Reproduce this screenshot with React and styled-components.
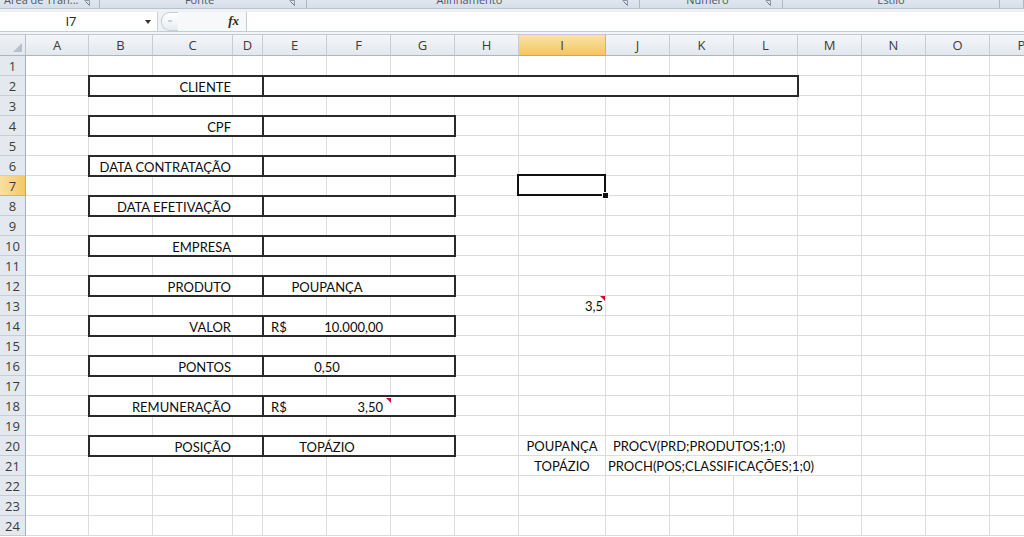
import React from "react";
import styled, { createGlobalStyle, css } from "styled-components";

const GlobalStyle = createGlobalStyle`
  html, body {
    margin: 0;
    padding: 0;
    background: #ffffff;
  }
  body {
    font-family: Lato, "Open Sans", sans-serif;
    overflow: hidden;
  }
`;

// column letters with their widths in px
const COLS = [
  ["A", 63], ["B", 64], ["C", 80], ["D", 30], ["E", 64], ["F", 64], ["G", 64], ["H", 64],
  ["I", 87], ["J", 64], ["K", 64], ["L", 64], ["M", 64], ["N", 64], ["O", 64], ["P", 64],
];
const ROW_COUNT = 24;
const ACTIVE_COL = 8;
const ACTIVE_ROW = 7;

const GROUPS = [
  { w: 100, label: "Área de Tran...", left: true },
  { w: 207, label: "Fonte" },
  { w: 333, label: "Alinhamento" },
  { w: 143, label: "Número" },
  { w: 217, label: "Estilo", noLauncher: true },
  { w: 24, label: "", noLauncher: true },
];

const label = (text) => ({ col: 1, span: 3, box: "label", text });
const value = (content = {}, span = 3) => ({ col: 4, span, box: "value", ...content });

const ROWS = {
  2: [label("CLIENTE"), value({}, 8)],
  4: [label("CPF"), value()],
  6: [label("DATA CONTRATAÇÃO"), value()],
  7: [{ col: 8, selected: true }],
  8: [label("DATA EFETIVAÇÃO"), value()],
  10: [label("EMPRESA"), value()],
  12: [label("PRODUTO"), value({ center: "POUPANÇA" })],
  13: [{ col: 8, align: "right", text: "3,5", note: true }],
  14: [label("VALOR"), value({ currency: "10.000,00" })],
  16: [label("PONTOS"), value({ center: "0,50" })],
  18: [label("REMUNERAÇÃO"), value({ currency: "3,50", note: true })],
  20: [
    label("POSIÇÃO"),
    value({ center: "TOPÁZIO" }),
    { col: 8, align: "center", text: "POUPANÇA" },
    { col: 9, span: 3, text: "PROCV(PRD;PRODUTOS;1;0)", pl: 7 },
  ],
  21: [
    { col: 8, align: "center", text: "TOPÁZIO" },
    { col: 9, span: 4, text: "PROCH(POS;CLASSIFICAÇÕES;1;0)" },
  ],
};

const justify = {
  left: "flex-start",
  center: "center",
  right: "flex-end",
  between: "space-between",
};

const Window = styled.div`
  width: 1024px;
  height: 537px;
  overflow: hidden;
  display: flex;
  flex-direction: column;
  background: #ffffff;
`;

/* ribbon group captions, only their lower half shows */
const Ribbon = styled.div`
  display: flex;
  height: 8px;
  flex: 0 0 8px;
  overflow: hidden;
  background: linear-gradient(#dfe6ee, #d6dee8);
  border-bottom: 1px solid #b9c3cf;
`;

const Group = styled.div`
  flex: 0 0 ${(p) => p.$w}px;
  display: flex;
  align-items: flex-start;
  border-right: 1px solid #aeb8c4;
  box-sizing: border-box;
  padding: 0 ${(p) => (p.$left ? 8 : 10)}px 0 ${(p) => (p.$left ? 4 : 10)}px;
`;

const GroupLabel = styled.span`
  flex: 1;
  text-align: ${(p) => (p.$left ? "left" : "center")};
  margin-top: -6px;
  font-family: "Open Sans", sans-serif;
  font-size: 11px;
  line-height: 12px;
  color: #4e5866;
  white-space: nowrap;
`;

const Launcher = styled.svg`
  flex: 0 0 7px;
`;

const FormulaBar = styled.div`
  display: flex;
  align-items: center;
  flex: 0 0 23px;
  padding-top: 2px;
  box-sizing: border-box;
  background: #eef1f5;
  border-bottom: 1px solid #c3cbd5;
`;

const NameBox = styled.div`
  display: flex;
  align-items: center;
  width: 158px;
  height: 19px;
  box-sizing: border-box;
  background: #ffffff;
  border-right: 1px solid #c9d0d9;
  font-family: "Open Sans", sans-serif;
  font-size: 13px;
  color: #222;
`;

const NameText = styled.span`
  flex: 1;
  text-align: center;
  padding-right: 3px;
`;

const DropArrow = styled.span`
  width: 0;
  height: 0;
  margin: 2px 6px 0 0;
  border-left: 3px solid transparent;
  border-right: 3px solid transparent;
  border-top: 4px solid #333;
`;

const Splitter = styled.div`
  display: flex;
  align-items: center;
  justify-content: center;
  width: 16px;
  height: 17px;
  margin-left: 3px;
  border: 1px solid #c4ccd6;
  border-right: none;
  border-radius: 9px 0 0 9px;
  background: linear-gradient(#ffffff, #e8ecf1);

  &::after {
    content: "";
    width: 4px;
    height: 2px;
    background: #c9d0d8;
  }
`;

const FxArea = styled.div`
  display: flex;
  align-items: center;
  justify-content: flex-end;
  width: 68px;
  height: 19px;
  padding-right: 7px;
  box-sizing: border-box;
  background: #f6f8fa;
  font-family: "Liberation Serif", serif;
  font-style: italic;
  font-weight: bold;
  font-size: 13px;
  color: #2a2a2a;
`;

const FormulaInput = styled.div`
  flex: 1;
  height: 19px;
  background: #ffffff;
  border-left: 1px solid #c3cad3;
`;

const Gap = styled.div`
  flex: 0 0 2px;
  background: #f2f4f7;
`;

const Sheet = styled.div`
  display: grid;
  grid-template-columns: 26px ${COLS.map((c) => `${c[1]}px`).join(" ")};
  grid-template-rows: 22px;
  grid-auto-rows: 20px;
  overflow: hidden;
  font-family: Lato, "Open Sans", sans-serif;
  font-size: 13px;
  color: #0c0c0c;
`;

const Corner = styled.div`
  display: flex;
  align-items: flex-end;
  justify-content: flex-end;
  padding: 0 3px 3px 0;
  background: linear-gradient(#eef1f4, #e2e7ed);
  border-top: 1px solid #c3cad3;
  border-right: 1px solid #b6c0cc;
  border-bottom: 1px solid #a9b6c4;
`;

const ColHead = styled.div`
  display: flex;
  align-items: center;
  justify-content: center;
  font-family: "Open Sans", sans-serif;
  font-size: 13px;
  color: #3b3b3b;
  border-top: 1px solid #c3cad3;
  background: ${(p) =>
    p.$active ? "linear-gradient(#fbe3a6, #f3c661)" : "linear-gradient(#f4f6f9, #e3e8ee)"};
  border-right: 1px solid ${(p) => (p.$active ? "#e2b04d" : "#c5ccd5")};
  border-bottom: 1px solid ${(p) => (p.$active ? "#e0a43a" : "#a9b6c4")};
`;

const RowHead = styled.div`
  display: flex;
  align-items: center;
  justify-content: center;
  font-family: "Open Sans", sans-serif;
  font-size: 13px;
  color: #3b3b3b;
  background: ${(p) => (p.$active ? "linear-gradient(90deg, #fbe0a0, #f4c865)" : "#e4e9ef")};
  border-right: 1px solid ${(p) => (p.$active ? "#e0a43a" : "#9eb0c4")};
  border-bottom: 1px solid ${(p) => (p.$active ? "#e2b04d" : "#c5cdd7")};
`;

const noteMark = css`
  &::after {
    content: "";
    position: absolute;
    top: 0;
    right: 0;
    border-top: 5px solid #c8102e;
    border-left: 5px solid transparent;
  }
`;

const selectedMark = css`
  &::before {
    content: "";
    position: absolute;
    top: -2px;
    left: -2px;
    right: -1px;
    bottom: -1px;
    border: 2px solid #111;
    z-index: 2;
  }
  &::after {
    content: "";
    position: absolute;
    right: -4px;
    bottom: -4px;
    width: 5px;
    height: 5px;
    background: #111;
    border: 1px solid #fff;
    z-index: 3;
  }
`;

const Cell = styled.div`
  position: relative;
  display: flex;
  align-items: center;
  justify-content: ${(p) => justify[p.$align || "left"]};
  grid-column: span ${(p) => p.$span || 1};
  padding: 1px ${(p) => p.$pr ?? 2}px 0 ${(p) => p.$pl ?? 2}px;
  white-space: pre;
  border-right: 1px solid #dadcdd;
  border-bottom: 1px solid #dadcdd;
  ${(p) =>
    p.$box &&
    css`
      margin: -1px;
      border: 2px solid #2a2a2a;
      z-index: 1;
    `}
  ${(p) => p.$note && noteMark}
  ${(p) => p.$selected && selectedMark}
`;

const ValueArea = styled.span`
  position: relative;
  align-self: stretch;
  display: flex;
  align-items: center;
  justify-content: ${(p) => justify[p.$align]};
  width: 127px;
  padding: 0 8px 0 7px;
  box-sizing: border-box;
  ${(p) => p.$note && noteMark}
`;

function BoxValue({ center, currency, note }) {
  if (center) return <ValueArea $align="center">{center}</ValueArea>;
  if (currency)
    return (
      <ValueArea $align="between" $note={note}>
        <span>R$</span>
        <span>{currency}</span>
      </ValueArea>
    );
  return null;
}

function SheetCell({ seg }) {
  if (!seg) return <Cell />;
  if (seg.box === "label")
    return (
      <Cell $box $span={seg.span} $align="right" $pr={31}>
        {seg.text}
      </Cell>
    );
  if (seg.box === "value")
    return (
      <Cell $box $span={seg.span} $pl={0} $pr={0}>
        <BoxValue {...seg} />
      </Cell>
    );
  return (
    <Cell
      $span={seg.span}
      $align={seg.align}
      $pl={seg.pl}
      $note={seg.note}
      $selected={seg.selected}
    >
      {seg.text}
    </Cell>
  );
}

function SheetRow({ n }) {
  const segs = ROWS[n] || [];
  const cells = [];
  for (let c = 0; c < COLS.length; ) {
    const seg = segs.find((s) => s.col === c);
    cells.push(<SheetCell key={c} seg={seg} />);
    c += seg?.span || 1;
  }
  return (
    <>
      <RowHead $active={n === ACTIVE_ROW}>{n}</RowHead>
      {cells}
    </>
  );
}

export default function App() {
  const rows = Array.from({ length: ROW_COUNT }, (_, i) => i + 1);
  return (
    <Window>
      <GlobalStyle />
      <Ribbon>
        {GROUPS.map((g, i) => (
          <Group key={i} $w={g.w} $left={g.left}>
            <GroupLabel $left={g.left}>{g.label}</GroupLabel>
            {!g.noLauncher && (
              <Launcher width="7" height="7" viewBox="0 0 7 7">
                <path d="M0.5 0.5h5v5" fill="none" stroke="#8a96a5" />
                <path d="M1.5 1.5l4 4" stroke="#6b7889" />
              </Launcher>
            )}
          </Group>
        ))}
      </Ribbon>
      <FormulaBar>
        <NameBox>
          <NameText>I7</NameText>
          <DropArrow />
        </NameBox>
        <Splitter />
        <FxArea>fx</FxArea>
        <FormulaInput />
      </FormulaBar>
      <Gap />
      <Sheet>
        <Corner>
          <svg width="9" height="9" viewBox="0 0 9 9">
            <path d="M9 0V9H0Z" fill="#b7c0cb" />
          </svg>
        </Corner>
        {COLS.map(([letter], i) => (
          <ColHead key={letter} $active={i === ACTIVE_COL}>
            {letter}
          </ColHead>
        ))}
        {rows.map((n) => (
          <SheetRow key={n} n={n} />
        ))}
      </Sheet>
    </Window>
  );
}
